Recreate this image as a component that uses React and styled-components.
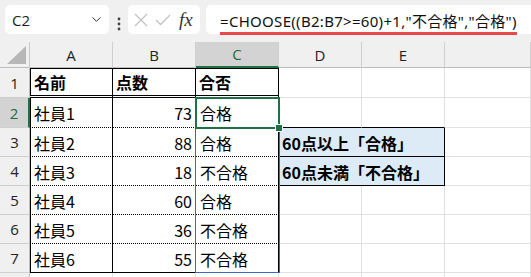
import styled, { createGlobalStyle } from "styled-components";
import { ChevronDown } from "lucide-react";

const GlobalStyle = createGlobalStyle`
  html, body {
    margin: 0;
    padding: 0;
    background: #ffffff;
    overflow: hidden;
  }
  body {
    width: 531px;
    height: 277px;
    font-family: "Noto Sans CJK JP", "Noto Sans", sans-serif;
    color: #000;
  }
`;

const Window = styled.div`
  width: 531px;
  height: 277px;
  overflow: hidden;
  display: flex;
  flex-direction: column;
  background: #fff;
`;

const Toolbar = styled.div`
  height: 42px;
  flex: none;
  box-sizing: border-box;
  display: flex;
  align-items: flex-start;
  padding-top: 5px;
  background: #f0f0f0;
`;

const NameBox = styled.div`
  width: 104px;
  height: 29px;
  margin-left: 5px;
  box-sizing: border-box;
  display: flex;
  align-items: center;
  justify-content: space-between;
  padding: 0 5px 0 7px;
  background: #fff;
  border-radius: 5px;
  font-family: "Open Sans", "Noto Sans", sans-serif;
  font-size: 15px;
  color: #222;
`;

const Grip = styled.svg`
  margin: 0 0 0 8px;
  align-self: center;
`;

const FuncBox = styled.div`
  width: 72px;
  height: 29px;
  margin-left: 7px;
  box-sizing: border-box;
  display: flex;
  align-items: center;
  gap: 7px;
  padding-left: 6px;
  background: #fff;
  border-radius: 5px;
`;

const Fx = styled.span`
  font-family: "Liberation Serif", serif;
  font-style: italic;
  font-size: 19px;
  color: #333;
  margin-left: 1px;
`;

const FormulaBox = styled.div`
  flex: 1;
  height: 29px;
  margin-left: 6px;
  box-sizing: border-box;
  display: flex;
  align-items: center;
  padding-left: 14px;
  background: #fff;
  border-radius: 5px 0 0 5px;
`;

const Formula = styled.span`
  font-family: "Noto Sans", "Noto Sans CJK JP", sans-serif;
  font-size: 15px;
  letter-spacing: 0.3px;
  color: #111;
  line-height: 22px;
  padding-top: 5px;
  border-bottom: 3px solid #e6484b;
  white-space: nowrap;
`;

const Sheet = styled.div`
  position: relative;
  display: grid;
  grid-template-columns: 30px repeat(5, 83px) 1fr;
  grid-template-rows: 26px 30px 30px repeat(6, 29px);
`;

const Corner = styled.div`
  box-sizing: border-box;
  background: #f0f0f0;
  border-right: 1px solid #c9c9c9;
  border-bottom: 1px solid #bdbdbd;
  display: flex;
  align-items: flex-end;
  justify-content: flex-end;
  padding: 0 3px 3px 0;
`;

const ColHead = styled.div`
  box-sizing: border-box;
  display: flex;
  align-items: center;
  justify-content: center;
  font-family: "Open Sans", "Noto Sans", sans-serif;
  font-size: 15px;
  background: ${(p) => (p.$active ? "#d3d3d3" : "#f0f0f0")};
  color: ${(p) => (p.$active ? "#1d6b40" : "#222")};
  border-right: 1px solid #cfcfcf;
  border-bottom: ${(p) => (p.$active ? "2px solid #1f7044" : "1px solid #bdbdbd")};
`;

const RowHead = styled.div`
  box-sizing: border-box;
  display: flex;
  align-items: center;
  justify-content: center;
  font-family: "Open Sans", "Noto Sans", sans-serif;
  font-size: 15px;
  background: ${(p) => (p.$active ? "#d3d3d3" : "#f0f0f0")};
  color: ${(p) => (p.$active ? "#1d6b40" : "#222")};
  border-right: ${(p) => (p.$active ? "2px solid #1f7044" : "1px solid #bdbdbd")};
  border-bottom: 1px solid #cfcfcf;
`;

const Cell = styled.div`
  box-sizing: border-box;
  display: flex;
  align-items: center;
  justify-content: ${(p) => (p.$num ? "flex-end" : "flex-start")};
  padding: 1px 3px 0 ${(p) => (p.$pl ?? 4)}px;
  font-size: 16px;
  font-weight: ${(p) => (p.$bold ? 700 : 400)};
  white-space: nowrap;
  background: ${(p) => p.$fill || "#fff"};
  border-right: ${(p) => p.$br || "1px solid #e1e1e1"};
  border-bottom: ${(p) => p.$bb || "1px solid #e1e1e1"};
  box-shadow: ${(p) => p.$shadow || "none"};
  grid-column: ${(p) => (p.$span ? `span ${p.$span}` : "auto")};
`;

const SpillRange = styled.div`
  position: absolute;
  left: 195px;
  top: 55px;
  width: 85px;
  height: 176px;
  box-sizing: border-box;
  border: 1px solid #3a67c2;
  pointer-events: none;
`;

const ActiveCell = styled.div`
  position: absolute;
  left: 195px;
  top: 55px;
  width: 85px;
  height: 32px;
  box-sizing: border-box;
  border: 2px solid #1f7044;
  pointer-events: none;
`;

const FillHandle = styled.div`
  position: absolute;
  right: -5px;
  bottom: -5px;
  width: 6px;
  height: 6px;
  background: #1f7044;
  border: 1px solid #fff;
`;

const BLACK = "1px solid #000";
const DOTTED = "1px dotted #000";

const people = [
  { name: "社員1", score: 73, result: "合格" },
  { name: "社員2", score: 88, result: "合格" },
  { name: "社員3", score: 18, result: "不合格" },
  { name: "社員4", score: 60, result: "合格" },
  { name: "社員5", score: 36, result: "不合格" },
  { name: "社員6", score: 55, result: "不合格" },
];

const notes = {
  3: "60点以上「合格」",
  4: "60点未満「不合格」",
};

const columns = ["A", "B", "C", "D", "E", ""];

function TableRow({ row, index }) {
  const last = index === people.length - 1;
  const bb = last ? BLACK : DOTTED;
  const rowNo = index + 2;
  const note = notes[rowNo];
  const nextNote = notes[rowNo + 1];
  const sideBottom = nextNote || note ? BLACK : undefined;
  return (
    <>
      <RowHead $active={rowNo === 2}>{rowNo}</RowHead>
      <Cell $br={BLACK} $bb={bb} $shadow="inset 1px 0 0 #000">
        {row.name}
      </Cell>
      <Cell $num $br={BLACK} $bb={bb}>
        {row.score}
      </Cell>
      <Cell $br={BLACK} $bb={bb}>
        {row.result}
      </Cell>
      {note ? (
        <Cell $span={2} $bold $pl={3} $fill="#ddebf7" $br={BLACK} $bb={BLACK}>
          {note}
        </Cell>
      ) : (
        <>
          <Cell $bb={sideBottom} />
          <Cell $bb={sideBottom} />
        </>
      )}
      <Cell />
    </>
  );
}

export default function App() {
  return (
    <Window>
      <GlobalStyle />
      <Toolbar>
        <NameBox>
          C2
          <ChevronDown size={15} strokeWidth={1.6} color="#333" />
        </NameBox>
        <Grip width="4" height="14" viewBox="0 0 4 14">
          <circle cx="2" cy="2" r="1.4" fill="#444" />
          <circle cx="2" cy="7" r="1.4" fill="#444" />
          <circle cx="2" cy="12" r="1.4" fill="#444" />
        </Grip>
        <FuncBox>
          <svg width="14" height="14" viewBox="0 0 14 14">
            <path d="M1 1L13 13M13 1L1 13" stroke="#c2c2c2" strokeWidth="1.3" fill="none" />
          </svg>
          <svg width="16" height="12" viewBox="0 0 16 12">
            <path d="M1 6L5.5 10.5L15 1" stroke="#c2c2c2" strokeWidth="1.3" fill="none" />
          </svg>
          <Fx>fx</Fx>
        </FuncBox>
        <FormulaBox>
          <Formula>=CHOOSE((B2:B7&gt;=60)+1,"不合格","合格")</Formula>
        </FormulaBox>
      </Toolbar>
      <Sheet>
        <Corner>
          <svg width="19" height="18" viewBox="0 0 19 18">
            <path d="M19 0L19 18L0 18Z" fill="#b7b7b7" />
          </svg>
        </Corner>
        {columns.map((c, i) => (
          <ColHead key={i} $active={c === "C"}>
            {c}
          </ColHead>
        ))}

        <RowHead>1</RowHead>
        <Cell $bold $br={BLACK} $bb="3px double #000" $shadow="inset 1px 1px 0 #000">
          名前
        </Cell>
        <Cell $bold $pl={3} $br={BLACK} $bb="3px double #000" $shadow="inset 0 1px 0 #000">
          点数
        </Cell>
        <Cell $bold $pl={3} $br={BLACK} $bb="3px double #000" $shadow="inset 0 1px 0 #000">
          合否
        </Cell>
        <Cell />
        <Cell />
        <Cell />

        {people.map((row, i) => (
          <TableRow key={row.name} row={row} index={i} />
        ))}

        <RowHead />
        <Cell />
        <Cell />
        <Cell />
        <Cell />
        <Cell />
        <Cell />

        <SpillRange />
        <ActiveCell>
          <FillHandle />
        </ActiveCell>
      </Sheet>
    </Window>
  );
}
